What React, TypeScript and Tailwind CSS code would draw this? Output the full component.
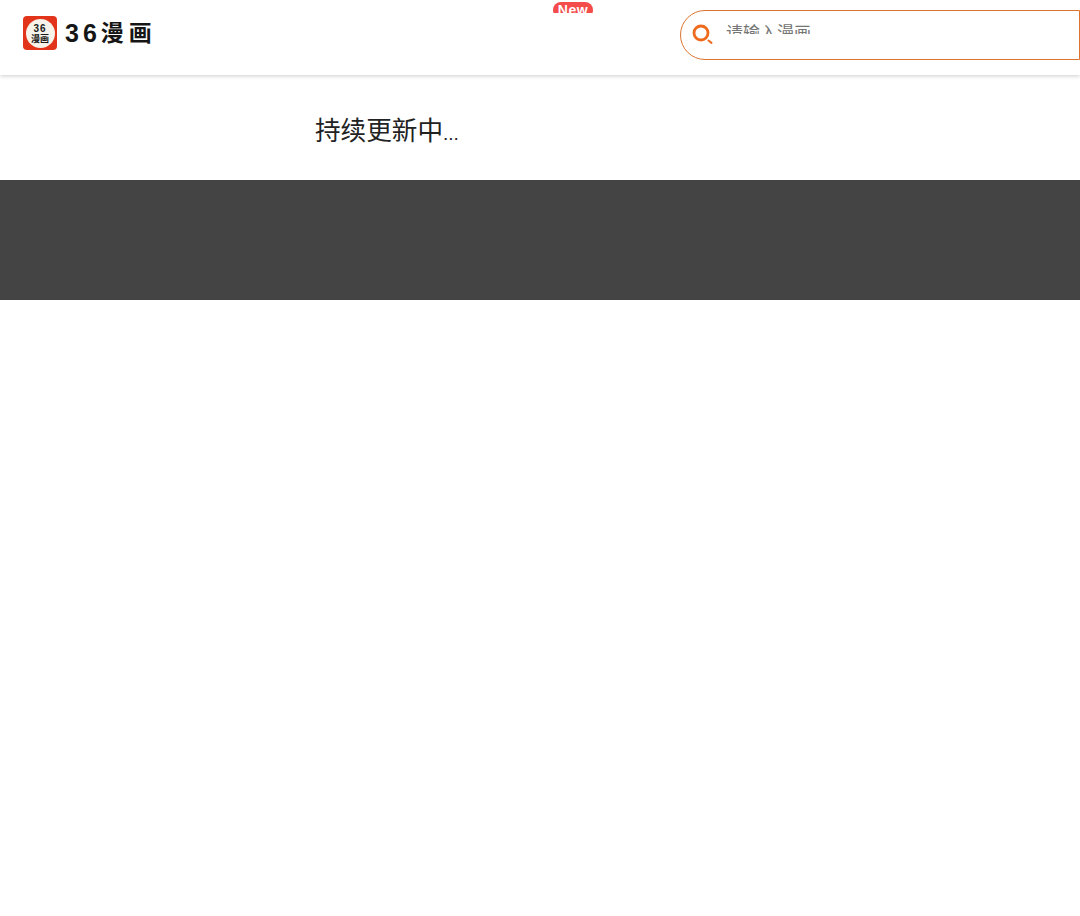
import React from "react";

function Logo() {
  return (
    <div className="flex items-center">
      <div className="flex h-[34px] w-[34px] items-center justify-center rounded-[4px] bg-[#e2341a]">
        <div className="flex h-[29px] w-[29px] flex-col items-center justify-center rounded-full bg-[#f7f3ea] font-bold text-[#1a1a1a]">
          <span className="text-[10px] leading-[11px] tracking-[1px]">36</span>
          <span className="text-[9px] leading-[10px]">漫画</span>
        </div>
      </div>
      <div className="ml-2 flex items-center leading-none font-bold text-[#161616]">
        <span className="text-[25px] tracking-[4px]">36</span>
        <span className="text-[23px] tracking-[5px]">漫画</span>
      </div>
    </div>
  );
}

function App() {
  return (
    <div className="min-h-[916px] bg-white font-['Liberation_Sans','Noto_Sans_CJK_SC',sans-serif]">
      <header className="relative flex h-[75px] justify-between pl-[23px] shadow-[0_1px_4px_rgba(0,0,0,0.2)]">
        <div className="flex h-[66px] items-center">
          <Logo />
        </div>

        <div className="absolute top-[2px] left-[553px] h-[11px] w-10 overflow-hidden">
          <div className="h-4 rounded-full bg-[#f44b4b] text-center text-[14px] leading-[17px] font-bold tracking-[0.5px] text-white">New</div>
        </div>

        <div className="mt-[10px] flex h-[50px] w-[400px] items-start rounded-l-[25px] border border-[#dc7430]">
          <svg className="mt-[12px] ml-[11px] h-[24px] w-[24px]" viewBox="0 0 24 24" fill="none">
            <circle cx="9" cy="10" r="7" stroke="#ee6a1c" strokeWidth="2.8" />
            <path d="M16.5 17.5l3 2.4" stroke="#ee6a1c" strokeWidth="2" strokeLinecap="round" />
          </svg>
          <div className="mt-[11px] ml-[10px] h-[12px] overflow-hidden">
            <div className="text-[17px] leading-[24px] text-[#757575]">请输入漫画</div>
          </div>
        </div>
      </header>

      <main className="flex h-[105px] items-center pt-[9px] pl-[315px]">
        <p className="text-[25.6px] leading-[36px] text-[#222]">
          持续更新中<span className="text-[19px]">...</span>
        </p>
      </main>

      <footer className="h-[120px] bg-[#444444]" />
    </div>
  );
}

export default App;
